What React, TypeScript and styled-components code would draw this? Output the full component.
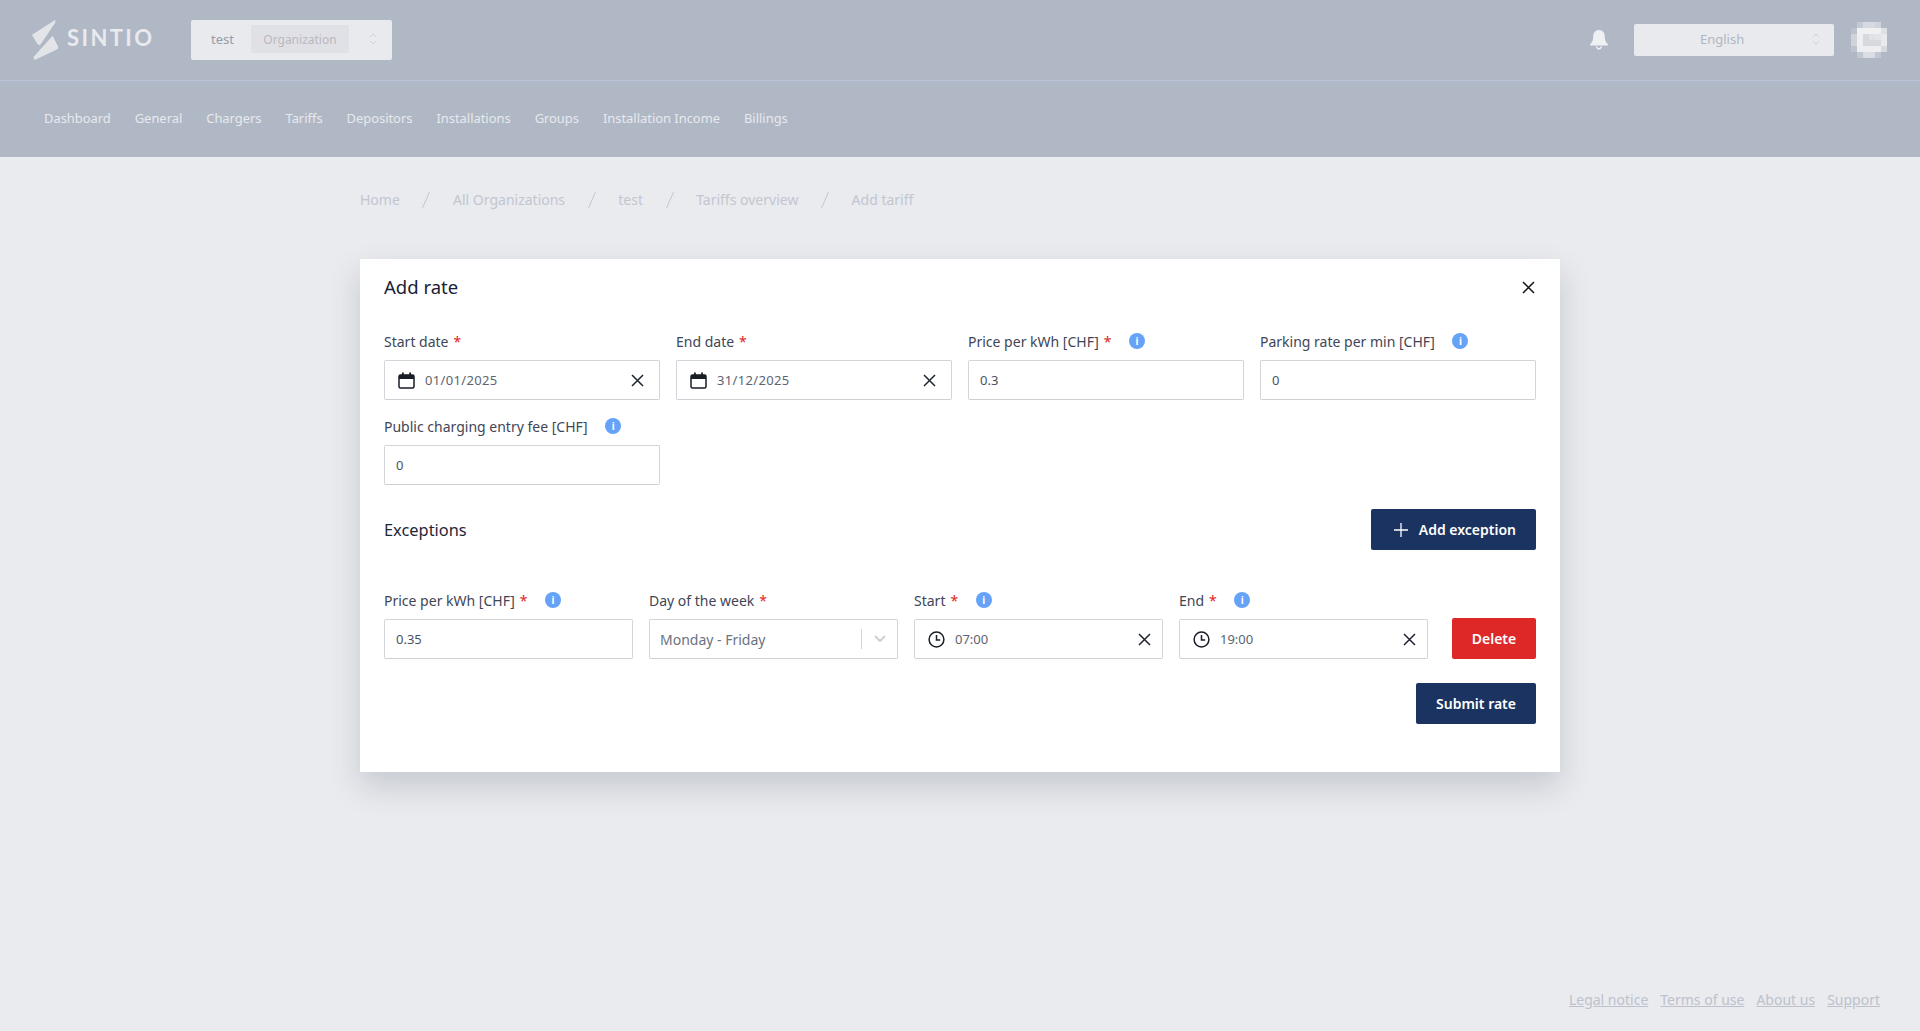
import React from "react";
import styled, { createGlobalStyle } from "styled-components";

const colorNavy = "#1b3360";
const colorRed = "#de2727";
const colorBorder = "#d3d5da";

const GlobalStyle = createGlobalStyle`
  html, body {
    margin: 0;
    padding: 0;
    height: 100%;
  }

  body {
    background-color: #e9ebef;
    font-family: "Noto Sans", "Open Sans", sans-serif;
    font-size: 14px;
  }

  * {
    box-sizing: border-box;
  }
`;

const Page = styled.div`
  min-height: 100vh;
  display: flex;
  flex-direction: column;
`;

const Header = styled.header`
  background-color: #b0b8c6;
`;

const TopBar = styled.div`
  height: 81px;
  padding: 0 33px 1px 32px;
  border-bottom: 1px solid #b8c4d8;
  display: flex;
  align-items: center;
`;

const Logo = styled.div`
  width: 159px;
  display: flex;
  align-items: center;
  gap: 9px;
  color: #e8eaee;
`;

const LogoText = styled.span`
  font-family: "Lato", "Noto Sans", sans-serif;
  font-size: 22px;
  font-weight: 700;
  letter-spacing: 2.4px;
  line-height: 1;
  margin-top: -3px;
`;

const OrgSelect = styled.div`
  width: 201px;
  height: 40px;
  padding: 0 15px 1px 20px;
  border-radius: 2px;
  background-color: #e8eaee;
  display: flex;
  align-items: center;
  color: #959cab;
  font-size: 13px;
`;

const OrgChip = styled.span`
  width: 98px;
  height: 28px;
  margin-left: 17px;
  margin-right: auto;
  border-radius: 2px;
  background-color: #dfe1e6;
  color: #bbb8c0;
  display: flex;
  align-items: center;
  justify-content: center;
  font-size: 12px;
`;

const TopRight = styled.div`
  margin-left: auto;
  display: flex;
  align-items: center;
`;

const LangSelect = styled.div`
  width: 200px;
  height: 32px;
  margin-left: 25px;
  margin-right: 17px;
  padding: 0 14px 1px 66px;
  border-radius: 2px;
  background-color: #e8eaee;
  color: #b0b6c3;
  font-size: 13px;
  display: flex;
  align-items: center;
  justify-content: space-between;
`;

const Nav = styled.nav`
  height: 76px;
  padding: 0 44px 2px;
  display: flex;
  align-items: center;
  gap: 24px;
`;

const NavLink = styled.a`
  color: #e7e9ed;
  font-size: 12.9px;
`;

const Main = styled.main`
  width: 1200px;
  margin: 0 auto;
`;

const Crumbs = styled.div`
  height: 102px;
  display: flex;
  align-items: center;
  gap: 22.6px;
  padding-bottom: 17px;
  color: #c2c6cf;
  font-size: 14px;
`;

const Modal = styled.section`
  background-color: #fff;
  padding: 16px 24px 48px;
  box-shadow: 0 14px 30px rgba(60, 66, 84, 0.2);
`;

const ModalHead = styled.div`
  height: 24px;
  margin-bottom: 33px;
  padding-right: 1px;
  display: flex;
  align-items: center;
  justify-content: space-between;
`;

const Title = styled.h2`
  margin: 0 0 2px;
  font-size: 18.5px;
  font-weight: 400;
  color: #1a2233;
`;

const RateGrid = styled.div`
  display: grid;
  grid-template-columns: repeat(4, 276px);
  column-gap: 16px;
  row-gap: 17px;
`;

const Field = styled.div`
  display: flex;
  flex-direction: column;
  gap: 8px;
`;

const Label = styled.label`
  height: 20px;
  padding-bottom: 2px;
  display: flex;
  align-items: center;
  color: #3f4656;
  font-size: 14px;
  white-space: nowrap;
`;

const Required = styled.span`
  margin-left: 5px;
  color: #e01e1e;
`;

const InputBox = styled.div`
  height: 40px;
  padding: 0 15px 0 11px;
  border: 1px solid ${colorBorder};
  border-bottom-color: #ced0d6;
  border-radius: 2px;
  background-color: #fff;
  display: flex;
  align-items: center;
  color: #4b5262;
  font-size: 13px;
`;

const PickerBox = styled(InputBox)<{ $tight?: boolean }>`
  padding-left: 13px;
  padding-right: ${(p) => (p.$tight ? 11 : 15)}px;
  gap: 10px;
`;

const PickerValue = styled.span<{ $spaced?: boolean }>`
  flex: 1;
  color: #5d6473;
  letter-spacing: ${(p) => (p.$spaced ? "0.35px" : "0")};
`;

const SelectBox = styled(InputBox)`
  padding: 0 11px 0 10px;
  color: #6b7280;
  font-size: 14px;
`;

const SelectValue = styled.span`
  flex: 1;
`;

const SelectDivider = styled.span`
  width: 1px;
  height: 20px;
  margin-right: 12px;
  background-color: #d3d5da;
`;

const SectionHead = styled.div`
  margin: 24px 0 41px;
  display: flex;
  align-items: center;
  justify-content: space-between;
`;

const SectionTitle = styled.h3`
  margin: 0;
  font-size: 16.4px;
  font-weight: 400;
  color: #1f2738;
`;

const Button = styled.button<{ $danger?: boolean }>`
  height: 41px;
  padding: 0 20px;
  border: 0;
  border-radius: 2px;
  background-color: ${(p) => (p.$danger ? colorRed : colorNavy)};
  color: #fff;
  font-family: inherit;
  font-size: 14px;
  font-weight: 600;
  display: inline-flex;
  align-items: center;
  justify-content: center;
  gap: 11px;
`;

const AddButton = styled(Button)`
  padding-left: 22.5px;
`;

const DeleteButton = styled(Button)`
  width: 84px;
  padding: 0;
`;

const ExceptionRow = styled.div`
  display: grid;
  grid-template-columns: repeat(4, 249px) 84px;
  column-gap: 16px;
  align-items: end;

  & > button {
    margin-left: 8px;
  }
`;

const SubmitRow = styled.div`
  margin-top: 24px;
  display: flex;
  justify-content: flex-end;
`;

const Footer = styled.footer`
  margin-top: auto;
  padding: 0 40px 22px 0;
  display: flex;
  justify-content: flex-end;
  gap: 12px;
`;

const FooterLink = styled.a`
  color: #bcc1cb;
  font-size: 14px;
  text-decoration: underline;
`;

const InfoBadge = styled.span`
  width: 16px;
  height: 16px;
  margin-left: 17.5px;
  border-radius: 50%;
  background-color: #66a3f8;
  color: #fff;
  font-size: 10px;
  font-weight: 700;
  line-height: 1;
  display: inline-flex;
  align-items: center;
  justify-content: center;
`;

const LogoMark = () => (
  <svg width="26" height="40" viewBox="32 20 26 40">
    <path
      d="M55 20.5 L32.5 35 L38 44 L40 44.5 L54.5 23 Z"
      fill="#e2e4e8"
      stroke="#e2e4e8"
      strokeLinejoin="round"
    />
    <path
      d="M52.5 36.5 L34 57 L34.5 59.5 L57 49 L58 47.5 Z"
      fill="#e2e4e8"
      stroke="#e2e4e8"
      strokeLinejoin="round"
    />
  </svg>
);

const UpDown = ({ color }: { color: string }) => (
  <svg width="8" height="14" viewBox="0 0 8 14" fill="none" stroke={color} strokeWidth="1">
    <path d="M1 5 L4 2 L7 5" />
    <path d="M1 9 L4 12 L7 9" />
  </svg>
);

const Bell = () => (
  <svg width="20" height="21" viewBox="0 0 20 21" fill="#eef0f3">
    <path d="M10 1 C6 1 4.2 4 4.2 7.5 C4.2 11 3.6 13 1.2 15.2 C0.6 15.8 1 16.6 1.8 16.6 H18.2 C19 16.6 19.4 15.8 18.8 15.2 C16.4 13 15.8 11 15.8 7.5 C15.8 4 14 1 10 1 Z" />
    <path d="M6.8 17.4 C7.2 19.4 8.4 20.6 10 20.6 C11.6 20.6 12.8 19.4 13.2 17.4 H11.6 C11.4 18.4 10.8 19 10 19 C9.2 19 8.6 18.4 8.4 17.4 Z" />
  </svg>
);

const avatarCells = [
  ["", "#c4cad5", "#d6d9df", "#d6d9df", "#d0d4da", ""],
  ["#bcc3cf", "#eef0f2", "#eef0f2", "#eef0f2", "#eef0f2", "#dde0e4"],
  ["#cfd3da", "#edeff2", "#d6d8dd", "#dfe1e5", "#e2e4e8", "#e8eaee"],
  ["#cfd3da", "#eef0f2", "#d6d8dd", "#d6d8dd", "#d6d8dd", "#e8eaee"],
  ["#bdc3cf", "#eceef0", "#eceef0", "#eceef0", "#eceef0", "#d6d9df"],
  ["", "#c2c8d3", "#dadde2", "#dadde2", "#c2c8d3", ""],
];

const Avatar = () => (
  <svg width="36" height="36" viewBox="0 0 36 36" shapeRendering="crispEdges">
    {avatarCells.map((row, y) =>
      row.map((fill, x) =>
        fill ? <rect key={`${x}-${y}`} x={x * 6} y={y * 6} width="6" height="6" fill={fill} /> : null
      )
    )}
  </svg>
);

const CrumbSlash = () => (
  <svg width="8" height="16" viewBox="0 0 8 16" fill="none" stroke="#c2c6cf" strokeWidth="1">
    <path d="M7.5 0 L0.5 16" />
  </svg>
);

const CloseIcon = ({ color = "#1f2430" }: { color?: string }) => (
  <svg width="13" height="13" viewBox="0 0 13 13" fill="none" stroke={color} strokeWidth="1.5">
    <path d="M1 1 L12 12 M12 1 L1 12" />
  </svg>
);

const CalendarIcon = () => (
  <svg width="17" height="17" viewBox="0 0 17 17" fill="none">
    <rect x="1" y="3" width="15" height="13" rx="1.5" stroke="#1a1d26" strokeWidth="1.5" />
    <rect x="1" y="3" width="15" height="4" fill="#1a1d26" />
    <rect x="4" y="0.5" width="1.8" height="3" fill="#1a1d26" />
    <rect x="11.2" y="0.5" width="1.8" height="3" fill="#1a1d26" />
  </svg>
);

const ClockIcon = () => (
  <svg width="17" height="17" viewBox="0 0 17 17" fill="none" stroke="#1a1d26" strokeWidth="1.5">
    <circle cx="8.5" cy="8.5" r="7.4" />
    <path d="M8.5 4 V9 H12.2" />
  </svg>
);

const PlusIcon = () => (
  <svg width="14" height="14" viewBox="0 0 14 14" fill="none" stroke="#fff" strokeWidth="1.3">
    <path d="M7 0 V14 M0 7 H14" />
  </svg>
);

const ChevronIcon = () => (
  <svg width="12" height="8" viewBox="0 0 12 8" fill="none" stroke="#cdd0d6" strokeWidth="2">
    <path d="M1 1 L6 6 L11 1" />
  </svg>
);

const navItems = [
  "Dashboard",
  "General",
  "Chargers",
  "Tariffs",
  "Depositors",
  "Installations",
  "Groups",
  "Installation Income",
  "Billings",
];

const crumbs = ["Home", "All Organizations", "test", "Tariffs overview", "Add tariff"];

const footerLinks = ["Legal notice", "Terms of use", "About us", "Support"];

interface FieldLabelProps {
  text: string;
  required?: boolean;
  info?: boolean;
}

const FieldLabel: React.FC<FieldLabelProps> = ({ text, required, info }) => (
  <Label>
    {text}
    {required && <Required>*</Required>}
    {info && <InfoBadge>i</InfoBadge>}
  </Label>
);

const DateField = ({ label, value }: { label: string; value: string }) => (
  <Field>
    <FieldLabel text={label} required />
    <PickerBox>
      <CalendarIcon />
      <PickerValue $spaced>{value}</PickerValue>
      <CloseIcon />
    </PickerBox>
  </Field>
);

const TimeField = ({ label, value }: { label: string; value: string }) => (
  <Field>
    <FieldLabel text={label} required info />
    <PickerBox $tight>
      <ClockIcon />
      <PickerValue>{value}</PickerValue>
      <CloseIcon />
    </PickerBox>
  </Field>
);

const App: React.FC = () => {
  return (
    <Page>
      <GlobalStyle />
      <Header>
        <TopBar>
          <Logo>
            <LogoMark />
            <LogoText>SINTIO</LogoText>
          </Logo>
          <OrgSelect>
            test
            <OrgChip>Organization</OrgChip>
            <UpDown color="#cdd0d7" />
          </OrgSelect>
          <TopRight>
            <Bell />
            <LangSelect>
              English
              <UpDown color="#cdd0d7" />
            </LangSelect>
            <Avatar />
          </TopRight>
        </TopBar>
        <Nav>
          {navItems.map((item) => (
            <NavLink key={item}>{item}</NavLink>
          ))}
        </Nav>
      </Header>

      <Main>
        <Crumbs>
          {crumbs.map((crumb, i) => (
            <React.Fragment key={crumb}>
              {i > 0 && <CrumbSlash />}
              <span>{crumb}</span>
            </React.Fragment>
          ))}
        </Crumbs>

        <Modal>
          <ModalHead>
            <Title>Add rate</Title>
            <CloseIcon color="#111" />
          </ModalHead>

          <RateGrid>
            <DateField label="Start date" value="01/01/2025" />
            <DateField label="End date" value="31/12/2025" />
            <Field>
              <FieldLabel text="Price per kWh [CHF]" required info />
              <InputBox>0.3</InputBox>
            </Field>
            <Field>
              <FieldLabel text="Parking rate per min [CHF]" info />
              <InputBox>0</InputBox>
            </Field>
            <Field>
              <FieldLabel text="Public charging entry fee [CHF]" info />
              <InputBox>0</InputBox>
            </Field>
          </RateGrid>

          <SectionHead>
            <SectionTitle>Exceptions</SectionTitle>
            <AddButton>
              <PlusIcon />
              Add exception
            </AddButton>
          </SectionHead>

          <ExceptionRow>
            <Field>
              <FieldLabel text="Price per kWh [CHF]" required info />
              <InputBox>0.35</InputBox>
            </Field>
            <Field>
              <FieldLabel text="Day of the week" required />
              <SelectBox>
                <SelectValue>Monday - Friday</SelectValue>
                <SelectDivider />
                <ChevronIcon />
              </SelectBox>
            </Field>
            <TimeField label="Start" value="07:00" />
            <TimeField label="End" value="19:00" />
            <DeleteButton $danger>Delete</DeleteButton>
          </ExceptionRow>

          <SubmitRow>
            <Button>Submit rate</Button>
          </SubmitRow>
        </Modal>
      </Main>

      <Footer>
        {footerLinks.map((link) => (
          <FooterLink key={link}>{link}</FooterLink>
        ))}
      </Footer>
    </Page>
  );
};

export default App;
